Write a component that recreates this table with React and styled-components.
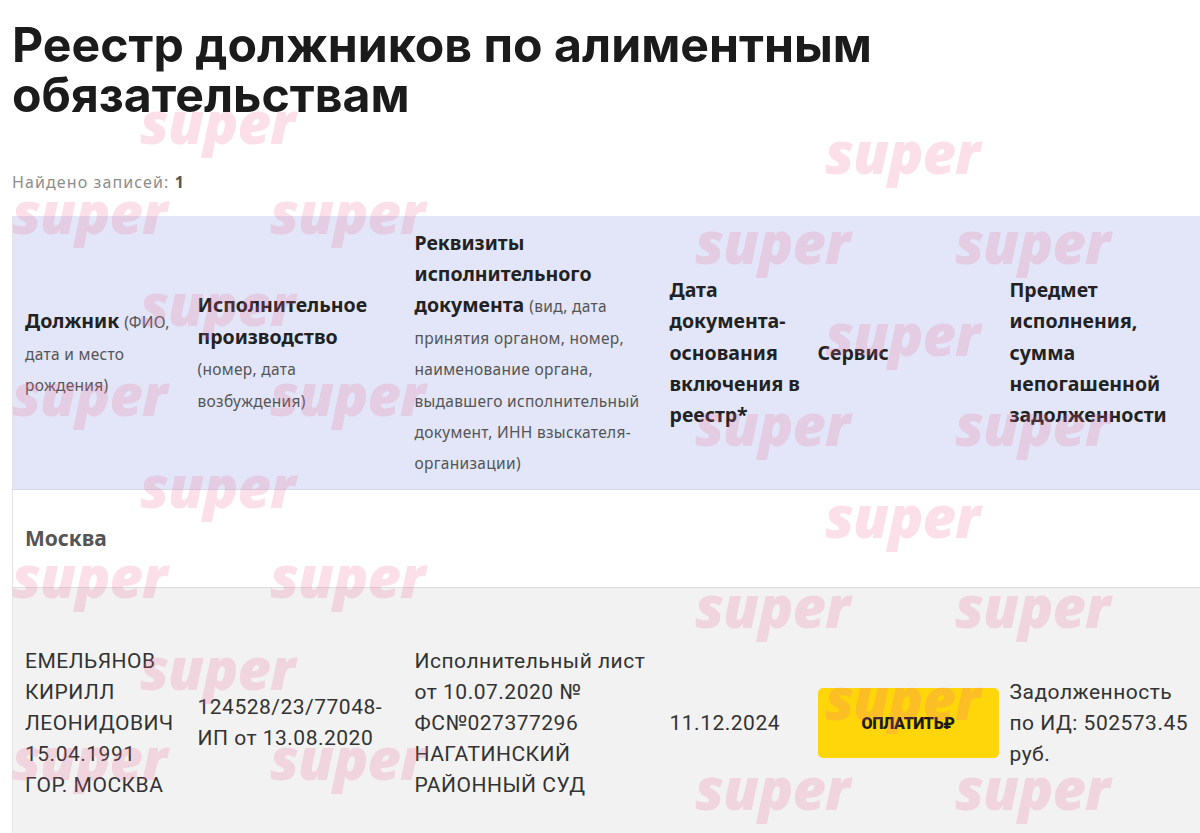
import React from "react";
import styled, { createGlobalStyle } from "styled-components";

const Global = createGlobalStyle`
  html, body { margin: 0; padding: 0; background: #ffffff; }
  body { overflow: hidden; font-family: Roboto, "Liberation Sans", sans-serif; }
`;

const Page = styled.div`
  position: relative;
  width: 1200px;
  height: 833px;
  overflow: hidden;
  padding: 0 0 0 12px;
  box-sizing: border-box;
`;

const Title = styled.h1`
  margin: 20px 0 0;
  font-family: Inter, "Noto Sans", sans-serif;
  font-weight: 700;
  font-size: 48.2px;
  line-height: 50px;
  color: #1b1b1b;
`;

const Found = styled.div`
  margin-top: 52px;
  font-family: "Noto Sans", Roboto, sans-serif;
  font-size: 16px;
  line-height: 20px;
  letter-spacing: 1.1px;
  color: #8d8d8d;
  b { color: #555; font-weight: 700; }
`;

const Table = styled.table`
  margin-top: 24px;
  width: 1188px;
  border-collapse: collapse;
  table-layout: fixed;
  border-left: 1px solid #e4e4e4;
`;

const HeadRow = styled.tr`
  background: #e2e6f8;
  border-bottom: 1px solid #d4d7e6;
`;

const Th = styled.th`
  height: 273px;
  box-sizing: border-box;
  text-align: left;
  vertical-align: middle;
  padding: 0 12px;
  font-family: "Noto Sans", Inter, sans-serif;
  font-weight: 700;
  font-size: 19.5px;
  line-height: 31.4px;
  color: #222;
  white-space: nowrap;
`;

const Sub = styled.span`
  font-family: "Noto Sans", Roboto, sans-serif;
  font-weight: 400;
  font-size: 15.5px;
  line-height: 1;
  letter-spacing: 0.3px;
  color: #555;
`;

const RegionRow = styled.tr`
  background: #ffffff;
  border-bottom: 1px solid #dcdcdc;
`;

const RegionCell = styled.td`
  height: 97px;
  padding: 0 12px;
  vertical-align: middle;
  font-family: "Noto Sans", Inter, sans-serif;
  font-weight: 700;
  font-size: 21px;
  color: #555;
`;

const DataRow = styled.tr`
  background: #f2f2f2;
`;

const Td = styled.td`
  padding: 58px 12px;
  vertical-align: middle;
  font-family: Roboto, sans-serif;
  font-size: 21px;
  line-height: 31px;
  letter-spacing: 0.5px;
  color: #333;
  white-space: nowrap;
`;

const ServiceCell = styled(Td)`
  padding-right: 0;
`;

const PayButton = styled.button`
  display: flex;
  align-items: center;
  justify-content: center;
  width: 181px;
  height: 70px;
  border: 0;
  border-radius: 5px;
  background: #fed60a;
  font-family: Roboto, sans-serif;
  font-weight: 900;
  font-size: 16px;
  letter-spacing: -0.4px;
  color: #1a1a1a;
  cursor: pointer;
`;

const Marks = styled.div`
  position: absolute;
  inset: 0;
  pointer-events: none;
  z-index: 5;
`;

const Mark = styled.span`
  position: absolute;
  font-family: "Open Sans", Inter, sans-serif;
  font-style: italic;
  font-weight: 800;
  font-size: 58px;
  line-height: 1;
  letter-spacing: -1px;
  color: rgba(240, 100, 145, 0.2);
  transform: translateY(-55%);
`;

const markBase = [
  [140, 125],
  [825, 155],
  [12, 215],
  [270, 215],
  [695, 245],
  [955, 245],
];

const marks = [];
for (let k = 0; k < 4; k++) {
  markBase.forEach(([x, y]) => marks.push([x, y + k * 182]));
}

export default function App() {
  return (
    <>
      <Global />
      <Page>
        <Title>
          Реестр должников по алиментным
          <br />
          обязательствам
        </Title>
        <Found>
          Найдено записей: <b>1</b>
        </Found>
        <Table>
          <colgroup>
            <col style={{ width: 173 }} />
            <col style={{ width: 217 }} />
            <col style={{ width: 255 }} />
            <col style={{ width: 148 }} />
            <col style={{ width: 192 }} />
            <col style={{ width: 203 }} />
          </colgroup>
          <thead>
            <HeadRow>
              <Th>
                Должник <Sub>(ФИО,</Sub>
                <br />
                <Sub>дата и место</Sub>
                <br />
                <Sub>рождения)</Sub>
              </Th>
              <Th>
                Исполнительное
                <br />
                производство
                <br />
                <Sub>
                  (номер, дата
                  <br />
                  возбуждения)
                </Sub>
              </Th>
              <Th>
                Реквизиты
                <br />
                исполнительного
                <br />
                документа <Sub>(вид, дата</Sub>
                <br />
                <Sub>
                  принятия органом, номер,
                  <br />
                  наименование органа,
                  <br />
                  выдавшего исполнительный
                  <br />
                  документ, ИНН взыскателя-
                  <br />
                  организации)
                </Sub>
              </Th>
              <Th>
                Дата
                <br />
                документа-
                <br />
                основания
                <br />
                включения в
                <br />
                реестр*
              </Th>
              <Th>Сервис</Th>
              <Th>
                Предмет
                <br />
                исполнения,
                <br />
                сумма
                <br />
                непогашенной
                <br />
                задолженности
              </Th>
            </HeadRow>
          </thead>
          <tbody>
            <RegionRow>
              <RegionCell colSpan={6}>Москва</RegionCell>
            </RegionRow>
            <DataRow>
              <Td>
                ЕМЕЛЬЯНОВ
                <br />
                КИРИЛЛ
                <br />
                ЛЕОНИДОВИЧ
                <br />
                15.04.1991
                <br />
                ГОР. МОСКВА
              </Td>
              <Td>
                124528/23/77048-
                <br />
                ИП от 13.08.2020
              </Td>
              <Td>
                Исполнительный лист
                <br />
                от 10.07.2020 №
                <br />
                ФС№027377296
                <br />
                НАГАТИНСКИЙ
                <br />
                РАЙОННЫЙ СУД
              </Td>
              <Td>11.12.2024</Td>
              <ServiceCell>
                <PayButton>ОПЛАТИТЬ₽</PayButton>
              </ServiceCell>
              <Td>
                Задолженность
                <br />
                по ИД: 502573.45
                <br />
                руб.
              </Td>
            </DataRow>
          </tbody>
        </Table>
        <Marks>
          {marks.map(([x, y], i) => (
            <Mark key={i} style={{ left: x, top: y }}>
              super
            </Mark>
          ))}
        </Marks>
      </Page>
    </>
  );
}
